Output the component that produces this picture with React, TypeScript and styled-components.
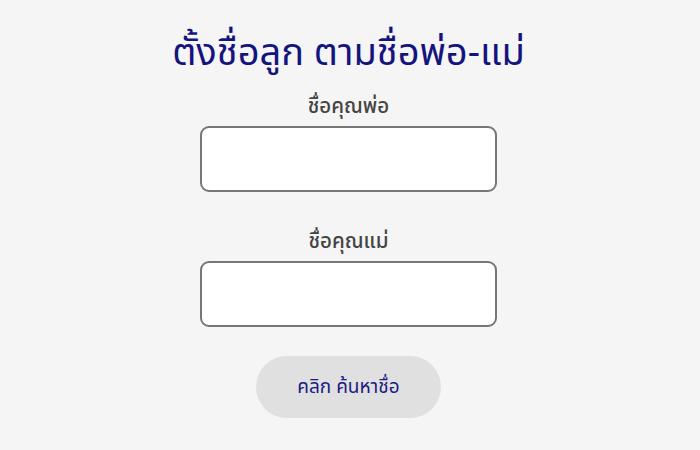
import styled, { createGlobalStyle } from "styled-components";

const GlobalStyle = createGlobalStyle`
  html, body {
    margin: 0;
    padding: 0;
    background: #f5f5f5;
  }
  body {
    font-family: "Noto Sans", "Noto Sans Thai", "Noto Sans Thai UI", Tahoma, sans-serif;
  }
`;

function App() {
  return (
    <>
      <GlobalStyle />
      <StyledPage>
        <StyledTitle>ตั้งชื่อลูก ตามชื่อพ่อ-แม่</StyledTitle>
        <StyledForm>
          <StyledField>
            <StyledLabel htmlFor="father">ชื่อคุณพ่อ</StyledLabel>
            <StyledInput id="father" type="text" />
          </StyledField>
          <StyledField>
            <StyledLabel htmlFor="mother">ชื่อคุณแม่</StyledLabel>
            <StyledInput id="mother" type="text" />
          </StyledField>
          <StyledButton type="button">คลิก ค้นหาชื่อ</StyledButton>
        </StyledForm>
      </StyledPage>
    </>
  );
}

export default App;

const StyledPage = styled.main`
  display: flex;
  flex-direction: column;
  align-items: center;
  width: 697px;
  height: 450px;
  padding-top: 26px;
  box-sizing: border-box;
`;

const StyledTitle = styled.h1`
  margin: 0;
  font-size: 38px;
  font-weight: 400;
  line-height: 48px;
  color: #14147e;
`;

const StyledForm = styled.form`
  display: flex;
  flex-direction: column;
  align-items: center;
  gap: 35px;
  margin-top: 18px;
`;

const StyledField = styled.div`
  display: flex;
  flex-direction: column;
  align-items: center;
  gap: 8px;
`;

const StyledLabel = styled.label`
  font-size: 20.5px;
  font-weight: 500;
  line-height: 26px;
  color: #444;
`;

const StyledInput = styled.input`
  width: 297px;
  height: 66px;
  box-sizing: border-box;
  border: 2px solid #777;
  border-radius: 9px;
  background: #fff;
  outline: none;
`;

const StyledButton = styled.button`
  width: 185px;
  height: 62px;
  margin-top: -6px;
  border: none;
  border-radius: 31px;
  background: #e0e0e0;
  color: #1c1c80;
  font-family: inherit;
  font-size: 19px;
  cursor: pointer;
`;
